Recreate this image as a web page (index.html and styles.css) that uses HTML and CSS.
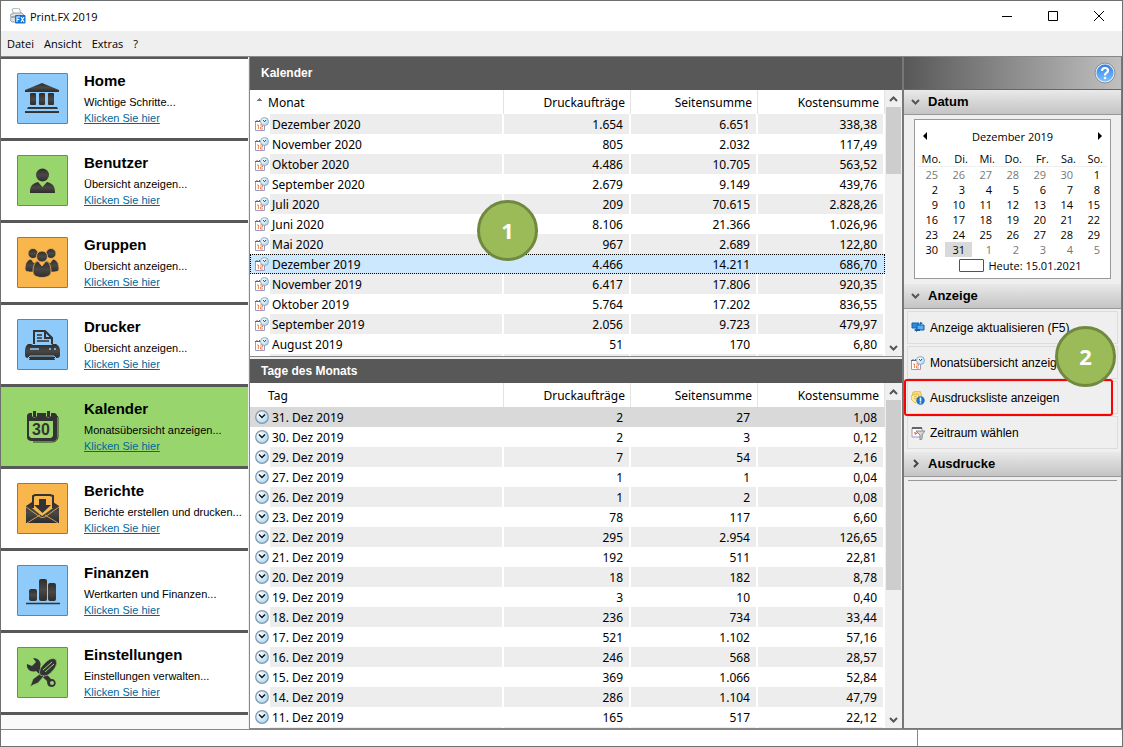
FILE: index.html
```
<!DOCTYPE html>
<html lang="de">
<head>
	<meta charset="utf-8">
	<title>Print.FX 2019</title>
	<meta name="viewport" content="width=device-width">
	<link rel="stylesheet" href="styles.css">
</head>
<body>
<svg class="defs" aria-hidden="true">
	<defs>
		<radialGradient id="dial" cx="35%" cy="35%" r="70%">
			<stop offset="0" stop-color="#fff"/>
			<stop offset="1" stop-color="#a5d8f4"/>
		</radialGradient>
		<linearGradient id="ink" x1="0" y1="0" x2="0" y2="1">
			<stop offset="0" stop-color="#2d2d2d"/>
			<stop offset=".5" stop-color="#4a4845"/>
			<stop offset="1" stop-color="#2d2d2d"/>
		</linearGradient>
		<linearGradient id="blue" x1="0" y1="0" x2="0" y2="1">
			<stop offset="0" stop-color="#2f80e8"/>
			<stop offset="1" stop-color="#7cc0ff"/>
		</linearGradient>
	</defs>
	<symbol id="month" viewBox="0 0 14 14">
		<path d="M.5 4.500h9v9h-9z" fill="#fff" stroke="#9a9ac4"/>
		<path d="M0 4.500h5M2 3v2M4.500 3v2" stroke="#62627a"/>
		<path d="M2 8h1.500v4M5 8h2.500v2H5.500v2H8" fill="none" stroke="#f58a5c"/>
		<circle cx="9.500" cy="4.500" r="4" fill="url(#dial)" stroke="#8fa6bd" stroke-width=".9"/>
		<path d="M8 3l1.500 1.800L11 3" fill="none" stroke="#234" stroke-width=".9"/>
	</symbol>
	<symbol id="day" viewBox="0 0 14 14">
		<circle cx="7" cy="7" r="6.300" fill="url(#dial)" stroke="#8496aa" stroke-width="1.200"/>
		<path d="M4 4.500l3 3 3-3" fill="none" stroke="#111" stroke-width="1.400"/>
	</symbol>
	<symbol id="up" viewBox="0 0 9 6"><path d="M1 5l3.500-3.500L8 5" fill="none" stroke="#555" stroke-width="2"/></symbol>
	<symbol id="down" viewBox="0 0 9 6"><path d="M1 1l3.500 3.500L8 1" fill="none" stroke="#555" stroke-width="2"/></symbol>
</svg>

<div class="window">
	<header class="titlebar">
		<svg class="app-icon" width="16" height="16" viewBox="0 0 16 16">
			<path d="M2 1l7-1 2 5-7 2z" fill="#fff" stroke="#9aa5ad" stroke-width=".8"/>
			<path d="M0 7l3-2h9l2 2v5l-3 2H2l-2-2z" fill="#d9dfe3" stroke="#87929a" stroke-width=".8"/>
			<path d="M1 9h8" stroke="#6d7880"/>
			<rect x="5" y="7" width="10.500" height="8.500" rx="1" fill="#1672d2"/>
			<path d="M7 14V9h3M7 11.500h2.500M11 9l3 5M14 9l-3 5" fill="none" stroke="#fff" stroke-width="1.100"/>
		</svg>
		<h1>Print.FX 2019</h1>
		<div class="caption">
			<button aria-label="Minimieren"><svg width="12" height="12"><path d="M1 6.500h10" stroke="#000"/></svg></button>
			<button aria-label="Maximieren"><svg width="12" height="12"><path d="M1.500 1.500h9v9h-9z" fill="none" stroke="#000"/></svg></button>
			<button aria-label="Schließen"><svg width="12" height="12"><path d="M1 1l10 10M11 1L1 11" stroke="#000"/></svg></button>
		</div>
	</header>
	<nav class="menu">
		<button>Datei</button>
		<button>Ansicht</button>
		<button>Extras</button>
		<button>?</button>
	</nav>

	<div class="main">
		<nav class="sidebar">
			<section class="item">
				<svg class="tile blue" viewBox="0 0 49 49">
					<g fill="url(#ink)"><path d="M24 9l17 7v2H7v-2z"/><rect x="12" y="19" width="6" height="12" rx="1"/><rect x="21" y="19" width="6" height="12" rx="1"/><rect x="30" y="19" width="6" height="12" rx="1"/><path d="M10 33h29l1 2H9zM7 37h34v2H7z"/></g>
				</svg>
				<div><h2>Home</h2><p>Wichtige Schritte...</p><a href="#">Klicken Sie hier</a></div>
			</section>
			<section class="item">
				<svg class="tile green" viewBox="0 0 49 49">
					<g fill="url(#ink)"><circle cx="24.500" cy="19" r="6.500"/><path d="M12 37c0-6 1-9 8-11l4.500 5 4.500-5c7 2 8 5 8 11z"/></g>
				</svg>
				<div><h2>Benutzer</h2><p>Übersicht anzeigen...</p><a href="#">Klicken Sie hier</a></div>
			</section>
			<section class="item">
				<svg class="tile orange" viewBox="0 0 49 49">
					<g fill="url(#ink)" stroke="#f9b64d" stroke-width=".8">
						<circle cx="15" cy="15.500" r="5"/><circle cx="33" cy="15.500" r="5"/>
						<path d="M7 31c0-6 2-9 6-10l3 4 4-3v12c-5 0-13 1-13-3zM41 31c0-6-2-9-6-10l-3 4-4-3v12c5 0 13 1 13-3z"/>
						<path d="M15 35c0-7 1-10 5-12l4 5 4-5c4 2 5 5 5 12-1 6-17 6-18 0z"/>
						<circle cx="24" cy="18.500" r="5.500"/>
					</g>
				</svg>
				<div><h2>Gruppen</h2><p>Übersicht anzeigen...</p><a href="#">Klicken Sie hier</a></div>
			</section>
			<section class="item">
				<svg class="tile blue" viewBox="0 0 49 49">
					<path d="M16 24V11h11l7 7v6M27 11v7h7" fill="none" stroke="#333" stroke-width="2"/>
					<path d="M19 15h5M19 18h5M19 21h12" stroke="#333" stroke-width="1.500"/>
					<path d="M10 24h3l2 1h18l2-1h3q4 2 4 7v4q0 3-3 3H10q-3 0-3-3v-4q0-5 3-7z" fill="url(#ink)"/>
					<path d="M13 35h22l2 5H11z" fill="#333"/>
					<path d="M10 38l2-2h24l2 2" fill="none" stroke="#8ecbfb"/>
					<path d="M12 29h9M31 29h2M36 29h2" stroke="#8ecbfb" stroke-width="1.500"/>
				</svg>
				<div><h2>Drucker</h2><p>Übersicht anzeigen...</p><a href="#">Klicken Sie hier</a></div>
			</section>
			<section class="item active">
				<svg class="tile plain" viewBox="0 0 49 49">
					<path d="M9 13l2-2h3v3q2 3 5 0v-3h9v3q2 3 5 0v-3h4l2 2v22q0 4-4 4H14q-5 0-5-4z" fill="#333"/>
					<path d="M11 19h24v15l-2 2H13l-2-2z" fill="#98d66d"/>
					<path d="M16.500 9v6M30.500 9v6" stroke="#333" stroke-width="3"/>
					<path d="M37 12l3 3v20q-1 5-6 5H15" fill="none" stroke="#333"/>
					<text class="cal-num" x="23" y="33">30</text>
				</svg>
				<div><h2>Kalender</h2><p>Monatsübersicht anzeigen...</p><a href="#">Klicken Sie hier</a></div>
			</section>
			<section class="item">
				<svg class="tile orange" viewBox="0 0 49 49">
					<path d="M15 24V12l2-1h15l3 1v12" fill="#f9b64d" stroke="#333" stroke-width="2"/>
					<path d="M8 22l6-4v6l10 8 11-8v-6l6 4v17H8z" fill="url(#ink)"/>
					<path d="M21 15h7v6h5l-8.500 8L16 21h5z" fill="#333"/>
					<path d="M8 23l14 10q2 1 5 0l14-10M9 39l13-8M40 39l-13-8" fill="none" stroke="#f9b64d" stroke-width=".8"/>
				</svg>
				<div><h2>Berichte</h2><p>Berichte erstellen und drucken...</p><a href="#">Klicken Sie hier</a></div>
			</section>
			<section class="item">
				<svg class="tile blue" viewBox="0 0 49 49">
					<g fill="url(#ink)"><rect x="11" y="23" width="8" height="12" rx="2"/><rect x="21" y="13" width="8" height="22" rx="2"/><rect x="30" y="17" width="8" height="18" rx="2"/></g>
					<path d="M8 37.500h34" stroke="#333" stroke-width="1.500"/>
				</svg>
				<div><h2>Finanzen</h2><p>Wertkarten und Finanzen...</p><a href="#">Klicken Sie hier</a></div>
			</section>
			<section class="item">
				<svg class="tile green" viewBox="0 0 49 49">
					<path d="M15 10c6 0 9 5 7 9l11 12c5-1 7 7 1 8-4 0-5-3-5-6L18 23c-5 2-10-2-9-7l5 2 4-4z" fill="#333"/>
					<circle cx="34" cy="35" r="2" fill="#98d66d"/>
					<path d="M12 39l3-8 8-6 3 3-6 7-5 2z" fill="#333" stroke="#98d66d" stroke-width=".7"/>
					<path d="M22 27c-2-6 3-10 7-14q5-4 9-1.500 2 4-1 8.500c-4 5-8 10-15 7z" fill="#333" stroke="#98d66d" stroke-width=".7"/>
					<path d="M25 22l9-8M27 24l9-8" stroke="#98d66d"/>
				</svg>
				<div><h2>Einstellungen</h2><p>Einstellungen verwalten...</p><a href="#">Klicken Sie hier</a></div>
			</section>
		</nav>

		<main class="content">
			<section class="pane months">
				<h2>Kalender</h2>
				<div class="list">
					<div class="rows">
						<table>
							<thead><tr><th class="sorted">Monat</th><th>Druckaufträge</th><th>Seitensumme</th><th>Kostensumme</th></tr></thead>
							<tbody>
								<tr><td><svg><use href="#month"/></svg>Dezember 2020</td><td>1.654</td><td>6.651</td><td>338,38</td></tr>
								<tr><td><svg><use href="#month"/></svg>November 2020</td><td>805</td><td>2.032</td><td>117,49</td></tr>
								<tr><td><svg><use href="#month"/></svg>Oktober 2020</td><td>4.486</td><td>10.705</td><td>563,52</td></tr>
								<tr><td><svg><use href="#month"/></svg>September 2020</td><td>2.679</td><td>9.149</td><td>439,76</td></tr>
								<tr><td><svg><use href="#month"/></svg>Juli 2020</td><td>209</td><td>70.615</td><td>2.828,26</td></tr>
								<tr><td><svg><use href="#month"/></svg>Juni 2020</td><td>8.106</td><td>21.366</td><td>1.026,96</td></tr>
								<tr><td><svg><use href="#month"/></svg>Mai 2020</td><td>967</td><td>2.689</td><td>122,80</td></tr>
								<tr class="focused"><td><svg><use href="#month"/></svg>Dezember 2019</td><td>4.466</td><td>14.211</td><td>686,70</td></tr>
								<tr><td><svg><use href="#month"/></svg>November 2019</td><td>6.417</td><td>17.806</td><td>920,35</td></tr>
								<tr><td><svg><use href="#month"/></svg>Oktober 2019</td><td>5.764</td><td>17.202</td><td>836,55</td></tr>
								<tr><td><svg><use href="#month"/></svg>September 2019</td><td>2.056</td><td>9.723</td><td>479,97</td></tr>
								<tr><td><svg><use href="#month"/></svg>August 2019</td><td>51</td><td>170</td><td>6,80</td></tr>
								<tr><td></td><td></td><td></td><td></td></tr>
							</tbody>
						</table>
					</div>
					<div class="scrollbar">
						<svg><use href="#up"/></svg>
						<div class="track"><div class="thumb" style="height: 29%"></div></div>
						<svg><use href="#down"/></svg>
					</div>
				</div>
			</section>
			<section class="pane days">
				<h2>Tage des Monats</h2>
				<div class="list">
					<div class="rows">
						<table>
							<thead><tr><th>Tag</th><th>Druckaufträge</th><th>Seitensumme</th><th>Kostensumme</th></tr></thead>
							<tbody>
								<tr class="selected"><td><svg><use href="#day"/></svg>31. Dez 2019</td><td>2</td><td>27</td><td>1,08</td></tr>
								<tr><td><svg><use href="#day"/></svg>30. Dez 2019</td><td>2</td><td>3</td><td>0,12</td></tr>
								<tr><td><svg><use href="#day"/></svg>29. Dez 2019</td><td>7</td><td>54</td><td>2,16</td></tr>
								<tr><td><svg><use href="#day"/></svg>27. Dez 2019</td><td>1</td><td>1</td><td>0,04</td></tr>
								<tr><td><svg><use href="#day"/></svg>26. Dez 2019</td><td>1</td><td>2</td><td>0,08</td></tr>
								<tr><td><svg><use href="#day"/></svg>23. Dez 2019</td><td>78</td><td>117</td><td>6,60</td></tr>
								<tr><td><svg><use href="#day"/></svg>22. Dez 2019</td><td>295</td><td>2.954</td><td>126,65</td></tr>
								<tr><td><svg><use href="#day"/></svg>21. Dez 2019</td><td>192</td><td>511</td><td>22,81</td></tr>
								<tr><td><svg><use href="#day"/></svg>20. Dez 2019</td><td>18</td><td>182</td><td>8,78</td></tr>
								<tr><td><svg><use href="#day"/></svg>19. Dez 2019</td><td>3</td><td>10</td><td>0,40</td></tr>
								<tr><td><svg><use href="#day"/></svg>18. Dez 2019</td><td>236</td><td>734</td><td>33,44</td></tr>
								<tr><td><svg><use href="#day"/></svg>17. Dez 2019</td><td>521</td><td>1.102</td><td>57,16</td></tr>
								<tr><td><svg><use href="#day"/></svg>16. Dez 2019</td><td>246</td><td>568</td><td>28,57</td></tr>
								<tr><td><svg><use href="#day"/></svg>15. Dez 2019</td><td>369</td><td>1.066</td><td>52,84</td></tr>
								<tr><td><svg><use href="#day"/></svg>14. Dez 2019</td><td>286</td><td>1.104</td><td>47,79</td></tr>
								<tr><td><svg><use href="#day"/></svg>11. Dez 2019</td><td>165</td><td>517</td><td>22,12</td></tr>
								<tr><td></td><td></td><td></td><td></td></tr>
							</tbody>
						</table>
					</div>
					<div class="scrollbar">
						<svg><use href="#up"/></svg>
						<div class="track"><div class="thumb" style="height: 61%"></div></div>
						<svg><use href="#down"/></svg>
					</div>
				</div>
			</section>
			<span class="badge one">1</span>
		</main>

		<aside class="tasks">
			<div class="tasks-top">
				<button aria-label="Hilfe">
					<svg width="22" height="22" viewBox="0 0 22 22">
						<circle cx="11" cy="11" r="10" fill="#e8eaee" stroke="#8b9097"/>
						<circle cx="11" cy="11" r="8.500" fill="url(#blue)"/>
						<path d="M8 9q0-3 3-3t3 2.500q0 1.500-1.500 2.300T11 13.500" fill="none" stroke="#fff" stroke-width="2.200"/>
						<circle cx="11" cy="16" r="1.300" fill="#fff"/>
					</svg>
				</button>
			</div>
			<button class="group"><svg width="9" height="6"><use href="#down"/></svg>Datum</button>
			<div class="group-body">
				<div class="calendar">
					<div class="cal-head">
						<button aria-label="Voriger Monat"><svg width="5" height="8"><path d="M4 0v8L0 4z"/></svg></button>
						<span>Dezember 2019</span>
						<button aria-label="Nächster Monat"><svg width="5" height="8"><path d="M1 0v8l4-4z"/></svg></button>
					</div>
					<table>
						<thead><tr><th>Mo.</th><th>Di.</th><th>Mi.</th><th>Do.</th><th>Fr.</th><th>Sa.</th><th>So.</th></tr></thead>
						<tbody>
							<tr><td class="off">25</td><td class="off">26</td><td class="off">27</td><td class="off">28</td><td class="off">29</td><td class="off">30</td><td>1</td></tr>
							<tr><td>2</td><td>3</td><td>4</td><td>5</td><td>6</td><td>7</td><td>8</td></tr>
							<tr><td>9</td><td>10</td><td>11</td><td>12</td><td>13</td><td>14</td><td>15</td></tr>
							<tr><td>16</td><td>17</td><td>18</td><td>19</td><td>20</td><td>21</td><td>22</td></tr>
							<tr><td>23</td><td>24</td><td>25</td><td>26</td><td>27</td><td>28</td><td>29</td></tr>
							<tr><td>30</td><td class="picked">31</td><td class="off">1</td><td class="off">2</td><td class="off">3</td><td class="off">4</td><td class="off">5</td></tr>
						</tbody>
					</table>
					<button class="today"><i></i>Heute: 15.01.2021</button>
				</div>
			</div>
			<button class="group"><svg width="9" height="6"><use href="#down"/></svg>Anzeige</button>
			<div class="actions">
				<button>
					<svg viewBox="0 0 14 14"><path d="M1 2h7v5H1z" fill="#2b8be0" stroke="#1560a8"/><path d="M6 4h7v5H6z" fill="#54b0f2" stroke="#1560a8"/><path d="M3 9l3-2v1h3v2H6v1zM12 2l-3-1v3z" fill="#1560a8"/></svg>
					Anzeige aktualisieren (F5)
				</button>
				<button>
					<svg><use href="#month"/></svg>
					Monatsübersicht anzeigen
				</button>
				<button class="marked">
					<svg viewBox="0 0 14 14"><path d="M2 1l7-1 2 6-6 3-4-3z" fill="#f8de6c" stroke="#d9b44a" stroke-width=".8"/><path d="M1 4l6-1 2 6-5 3-4-4z" fill="#fceb96" stroke="#d9b44a" stroke-width=".8"/><path d="M3 6l3-1M3 8l3-1" stroke="#d9b44a"/><circle cx="9.500" cy="9.500" r="4.200" fill="#1673d0"/><path d="M9.500 6.500v4M9.500 11.200v1.300" stroke="#fff" stroke-width="1.600"/></svg>
					Ausdrucksliste anzeigen
				</button>
				<button>
					<svg viewBox="0 0 14 14"><path d="M1 2h10v9H1z" fill="#fff" stroke="#9a9ac4"/><path d="M1 2h10" stroke="#666" stroke-width="2"/><path d="M3 6l4 1-3 2z" fill="#f06a35"/><path d="M5 5h9l-3 4v4l-2 1V9z" fill="#d5d5d5" stroke="#777" stroke-width=".8"/></svg>
					Zeitraum wählen
				</button>
			</div>
			<button class="group"><svg width="9" height="9" viewBox="-2 0 9 9"><path d="M1 1l3.500 3.500L1 8" fill="none" stroke="#444" stroke-width="2"/></svg>Ausdrucke</button>
			<hr>
			<span class="badge two">2</span>
		</aside>
	</div>

	<footer class="status"><div></div><div></div></footer>
</div>
</body>
</html>
```
FILE: styles.css
```
* {
	box-sizing: border-box;
}
body {
	margin: 0;
	font-family: "Open Sans", "Noto Sans", sans-serif;
	font-size: 11px;
	color: #000;
}
h1, h2, p {
	margin: 0;
}
button {
	font: inherit;
	color: inherit;
	background: none;
	border: none;
	padding: 0;
}
svg {
	display: block;
	flex: none;
}
.defs {
	position: absolute;
	width: 0;
	height: 0;
}

.window {
	display: flex;
	flex-direction: column;
	height: 100vh;
	min-height: 600px;
	border: 1px solid #6f6f6f;
	background: #efefef;
	overflow: hidden;
}

.titlebar {
	display: flex;
	align-items: center;
	height: 30px;
	padding-left: 9px;
	background: #fff;
}
.titlebar h1 {
	flex: 1;
	margin-left: 4px;
	font-size: 11px;
	font-weight: normal;
}
.caption {
	display: flex;
}
.caption button {
	display: grid;
	place-items: center;
	width: 46px;
	height: 30px;
}
.menu {
	display: flex;
	gap: 10px;
	height: 25px;
	padding-left: 6px;
}

.main {
	flex: 1;
	display: grid;
	grid-template-columns: 247px 1fr 220px;
	min-height: 0;
	border-top: 1px solid #888;
}

/* navigation */
.sidebar {
	border-top: 2px solid #585858;
	background: #fafafa;
	font-family: "Liberation Sans", Arial, sans-serif;
	overflow: hidden;
}
.item {
	display: flex;
	gap: 16px;
	height: 82px;
	padding: 13px 0 0 16px;
	background: #fff;
	border-bottom: 3px solid #585858;
	white-space: nowrap;
}
.item.active {
	background: #98d66d;
}
.item h2 {
	margin-bottom: 5px;
	font-size: 15px;
	line-height: 17px;
}
.item p,
.item a {
	display: block;
	font-size: 11px;
	line-height: 16px;
}
.item a {
	color: #006699;
}
.tile {
	width: 51px;
	height: 51px;
	margin-top: 1px;
	border: 1px solid #7d7d7d;
	border-radius: 1px;
}
.tile.blue {
	background: #8ecbfb;
}
.tile.green {
	background: #98d66d;
}
.tile.orange {
	background: #f9b64d;
}
.tile.plain {
	border-color: transparent;
}
.cal-num {
	font-size: 16px;
	font-weight: bold;
	text-anchor: middle;
	fill: #333;
}

/* lists */
.content {
	position: relative;
	display: grid;
	grid-template-rows: 302px 1fr;
	min-height: 0;
	margin-left: 1px;
	border-left: 1px solid #888;
}
.pane {
	display: flex;
	flex-direction: column;
	min-height: 0;
	background: #fff;
	border-bottom: 1px solid #888;
}
.pane.months {
	margin-bottom: 2px;
}
.pane h2 {
	padding-left: 11px;
	background: #585858;
	color: #fff;
	font: bold 12px/24px "Liberation Sans", Arial, sans-serif;
}
.pane.months h2 {
	line-height: 33px;
}
.list {
	flex: 1;
	display: flex;
	min-height: 0;
}
.rows {
	flex: 1;
	overflow: hidden;
}
.rows table {
	width: 100%;
	table-layout: fixed;
	border-spacing: 0;
	font: 12px/18px "Noto Sans", Tahoma, sans-serif;
}
.rows th,
.rows td {
	width: 127px;
	height: 20px;
	padding: 2px 6px 0 0;
	border-right: 2px solid #fff;
	text-align: right;
	white-space: nowrap;
}
.rows th {
	height: 24px;
	padding-right: 5px;
	border-right: 1px solid #e3e3e3;
	font-weight: normal;
}
.rows th:first-child,
.rows td:first-child {
	width: auto;
	text-align: left;
}
.rows th:first-child {
	padding-left: 18px;
}
.rows th.sorted {
	background: conic-gradient(from 135deg at 50% 0, #777 90deg, transparent 0) 6px 8px / 6px 3px no-repeat;
}
.rows td:first-child {
	padding-left: 5px;
}
.rows td svg {
	float: left;
	width: 14px;
	height: 14px;
	margin: 1px 3px 0 0;
}
.rows tr:nth-child(odd) td {
	background: #ededed;
}
.rows tr:nth-child(odd) td:first-child {
	background: linear-gradient(90deg, #fff 20px, #ededed 20px);
}
.rows tbody .selected td,
.rows tbody .selected td:first-child {
	background: #d9d9d9;
	border-color: #d9d9d9;
}
.rows .focused td {
	background: #cce8ff;
	border-color: #cce8ff;
}
.rows .focused {
	outline: 1px dotted #000;
	outline-offset: -1px;
}

.scrollbar {
	display: flex;
	flex-direction: column;
	width: 17px;
	padding: 0 1px;
	background: #f0f0f0;
}
.scrollbar svg {
	width: 9px;
	height: 6px;
	margin: 6px 3px 5px;
}
.track {
	flex: 1;
}
.thumb {
	background: #cdcdcd;
}

/* task panel */
.tasks {
	position: relative;
	display: flex;
	flex-direction: column;
	border: solid #777;
	border-width: 0 1px 1px 2px;
	font-family: "Liberation Sans", Arial, sans-serif;
}
.tasks-top {
	display: flex;
	align-items: center;
	justify-content: flex-end;
	height: 33px;
	padding-right: 5px;
	background: linear-gradient(90deg, #585858, #c0c0c0);
	border-bottom: 1px solid #666;
}
.group {
	display: flex;
	align-items: center;
	gap: 8px;
	height: 25px;
	padding: 0 0 1px 7px;
	background: linear-gradient(#e9e9e9, #c4c4c4);
	border-bottom: 1px solid #999;
	font-size: 13px;
	font-weight: bold;
}
.group-body {
	padding: 4px 10px 5px;
}
.calendar {
	height: 160px;
	padding: 0 3px;
	background: #fff;
	border: 1px solid #999;
	font: 11px/15px "Open Sans", "Noto Sans", sans-serif;
}
.cal-head {
	display: flex;
	align-items: center;
	justify-content: space-between;
	height: 32px;
	padding: 0 5px;
}
.calendar table {
	width: 100%;
	table-layout: fixed;
	border-spacing: 0;
}
.calendar th,
.calendar td {
	padding: 0 7px 0 0;
	text-align: right;
}
.calendar th {
	padding-right: 4px;
	border-bottom: 1px solid #eee;
	font-weight: normal;
	line-height: 14px;
}
.calendar .off {
	color: #777;
}
.calendar .picked {
	background: #d9d9d9;
}
.today {
	display: flex;
	align-items: center;
	gap: 5px;
	margin: 1px auto 0;
	padding-left: 15px;
	line-height: 15px;
}
.today i {
	width: 25px;
	height: 13px;
	border: 1px solid #0066cc;
	border-radius: 1px;
}
.actions {
	display: grid;
	gap: 2px;
	padding: 2px 3px 3px;
}
.actions button {
	position: relative;
	display: flex;
	align-items: center;
	gap: 5px;
	height: 33px;
	padding-left: 3px;
	border: 1px solid #dcdcdc;
	font-size: 12px;
	white-space: nowrap;
}
.actions svg {
	width: 14px;
	height: 14px;
}
.marked::after {
	content: "";
	position: absolute;
	inset: -3px 4px -3px -4px;
	border: 2px solid #f00;
	border-radius: 3px;
}
.tasks hr {
	margin: 3px 4px;
	border: 0;
	border-top: 1px solid #999;
}

.badge {
	position: absolute;
	width: 61px;
	height: 61px;
	border: 3px solid #71893f;
	border-radius: 50%;
	background: #9bbb59;
	color: #fff;
	font: bold 22px/55px "Open Sans", sans-serif;
	text-align: center;
}
.badge.one {
	left: 227px;
	top: 143px;
}
.badge.two {
	right: 5px;
	top: 269px;
}

.status {
	display: grid;
	grid-template-columns: 1fr 205px;
	height: 17px;
	background: #fff;
	border-top: 1px solid #888;
}
.status div + div {
	border-left: 1px solid #888;
}
```
